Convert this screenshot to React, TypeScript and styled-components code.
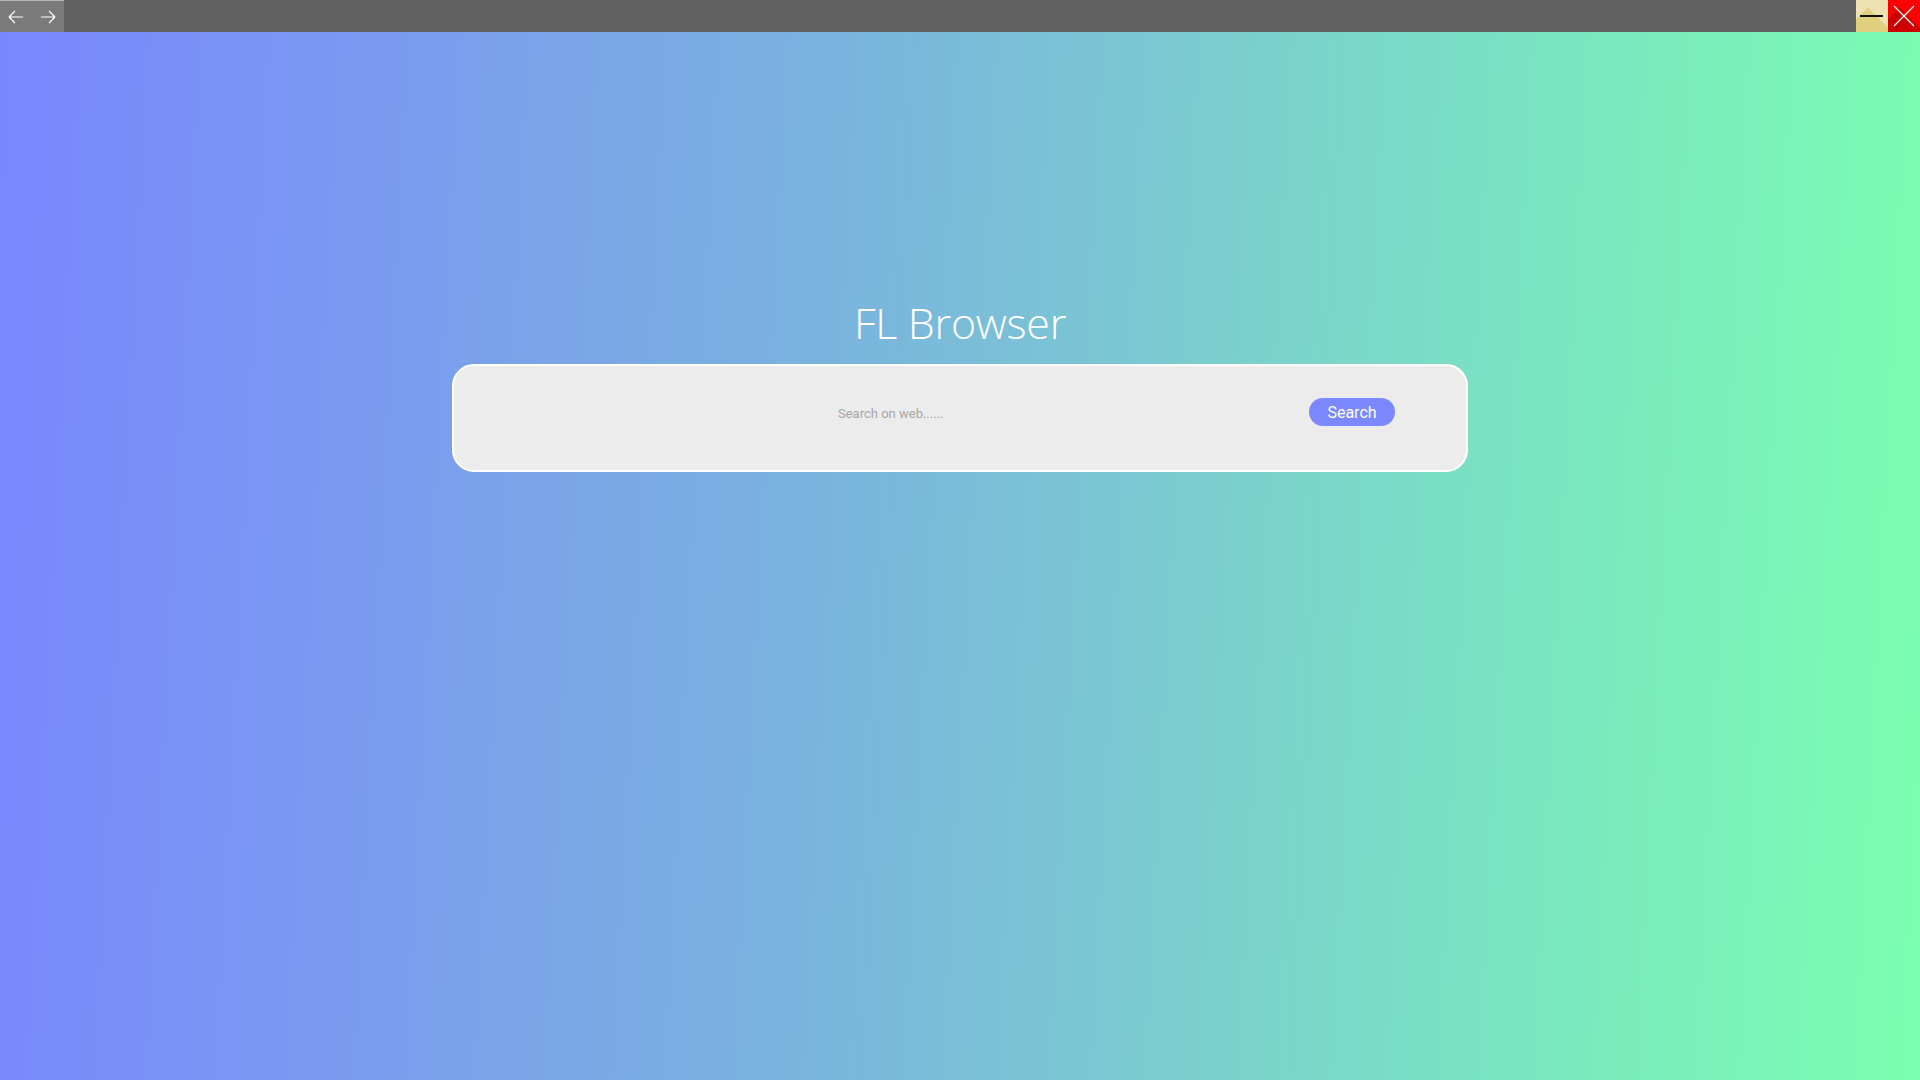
import styled, { createGlobalStyle } from "styled-components";

const GlobalStyle = createGlobalStyle`
  html, body, #root {
    margin: 0;
    padding: 0;
    height: 100%;
  }
  body {
    font-family: Roboto, "Liberation Sans", sans-serif;
    overflow: hidden;
  }
`;

const Shell = styled.div`
  display: flex;
  flex-direction: column;
  width: 1920px;
  height: 1080px;
`;

const TitleBar = styled.div`
  display: flex;
  align-items: stretch;
  height: 32px;
  background: #606060;
  flex-shrink: 0;
`;

const NavGroup = styled.div`
  display: flex;
  width: 64px;
  background: #7a7a7a;
  border-top: 1px solid #b4b4b4;
  box-sizing: border-box;
`;

const NavButton = styled.button`
  flex: 1;
  display: flex;
  align-items: center;
  justify-content: center;
  border: none;
  padding: 0;
  background: transparent;
  cursor: pointer;
`;

const Spacer = styled.div`
  flex: 1;
`;

const WindowButton = styled.button<{ $base: string; $shade: string }>`
  position: relative;
  width: 32px;
  display: flex;
  align-items: center;
  justify-content: center;
  border: none;
  padding: 0;
  overflow: hidden;
  background: ${({ $base }) => $base};
  cursor: pointer;
  svg {
    position: relative;
    z-index: 1;
  }
  &::before {
    content: "";
    position: absolute;
    left: 50%;
    top: 50%;
    width: 48px;
    height: 48px;
    background: ${({ $shade }) => $shade};
    transform-origin: 0 0;
    transform: rotate(45deg) translate(-9px, -3px);
  }
`;

const Stage = styled.main`
  flex: 1;
  display: flex;
  flex-direction: column;
  align-items: center;
  padding-top: 259px;
  background: linear-gradient(93deg, #7a86ff 0%, #7ab6dc 45%, #7ae6c0 80%, #7affb0 100%);
`;

const Heading = styled.h1`
  margin: 0 0 9px;
  font-family: "Open Sans", "Noto Sans", sans-serif;
  font-weight: 300;
  font-size: 43px;
  line-height: 64px;
  color: #ffffff;
  letter-spacing: -0.3px;
`;

const SearchCard = styled.form`
  display: flex;
  align-items: center;
  gap: 12px;
  width: 1016px;
  height: 108px;
  box-sizing: border-box;
  padding: 0 71px 12px 384px;
  background: #ececec;
  border: 2px solid #ffffff;
  border-radius: 22px;
`;

const QueryInput = styled.input`
  flex: 1;
  min-width: 0;
  border: none;
  outline: none;
  background: transparent;
  font-family: Roboto, "Liberation Sans", sans-serif;
  font-size: 13px;
  color: #555;
  padding: 0;
  margin-top: 2px;
  &::placeholder {
    color: #a6a6a6;
  }
`;

const SearchButton = styled.button`
  width: 86px;
  height: 28px;
  flex-shrink: 0;
  border: none;
  border-radius: 14px;
  background: #7b88ff;
  color: #ffffff;
  font-family: Roboto, "Liberation Sans", sans-serif;
  font-size: 16px;
  padding: 0;
  cursor: pointer;
`;

function Arrow({ dir }: { dir: "left" | "right" }) {
  const d = dir === "left" ? "M3 8 H17 M3 8 L9 2 M3 8 L9 14" : "M17 8 H3 M17 8 L11 2 M17 8 L11 14";
  return (
    <svg width="20" height="16" viewBox="0 0 20 16">
      <path d={d} stroke="#ffffff" strokeWidth="1.2" fill="none" />
    </svg>
  );
}

export default function App() {
  return (
    <Shell>
      <GlobalStyle />
      <TitleBar>
        <NavGroup>
          <NavButton aria-label="Back">
            <Arrow dir="left" />
          </NavButton>
          <NavButton aria-label="Forward">
            <Arrow dir="right" />
          </NavButton>
        </NavGroup>
        <Spacer />
        <WindowButton $base="#efe2b2" $shade="#e0cf7c" aria-label="Minimize">
          <svg width="24" height="4" viewBox="0 0 24 4">
            <rect x="0" y="1" width="23" height="2" fill="#111" />
          </svg>
        </WindowButton>
        <WindowButton $base="#ff0000" $shade="#cc0000" aria-label="Close">
          <svg width="22" height="22" viewBox="0 0 22 22">
            <path d="M1 1 L21 21 M21 1 L1 21" stroke="#ffffff" strokeWidth="1.2" />
          </svg>
        </WindowButton>
      </TitleBar>
      <Stage>
        <Heading>FL Browser</Heading>
        <SearchCard onSubmit={(e) => e.preventDefault()}>
          <QueryInput placeholder="Search on web......" />
          <SearchButton type="submit">Search</SearchButton>
        </SearchCard>
      </Stage>
    </Shell>
  );
}
